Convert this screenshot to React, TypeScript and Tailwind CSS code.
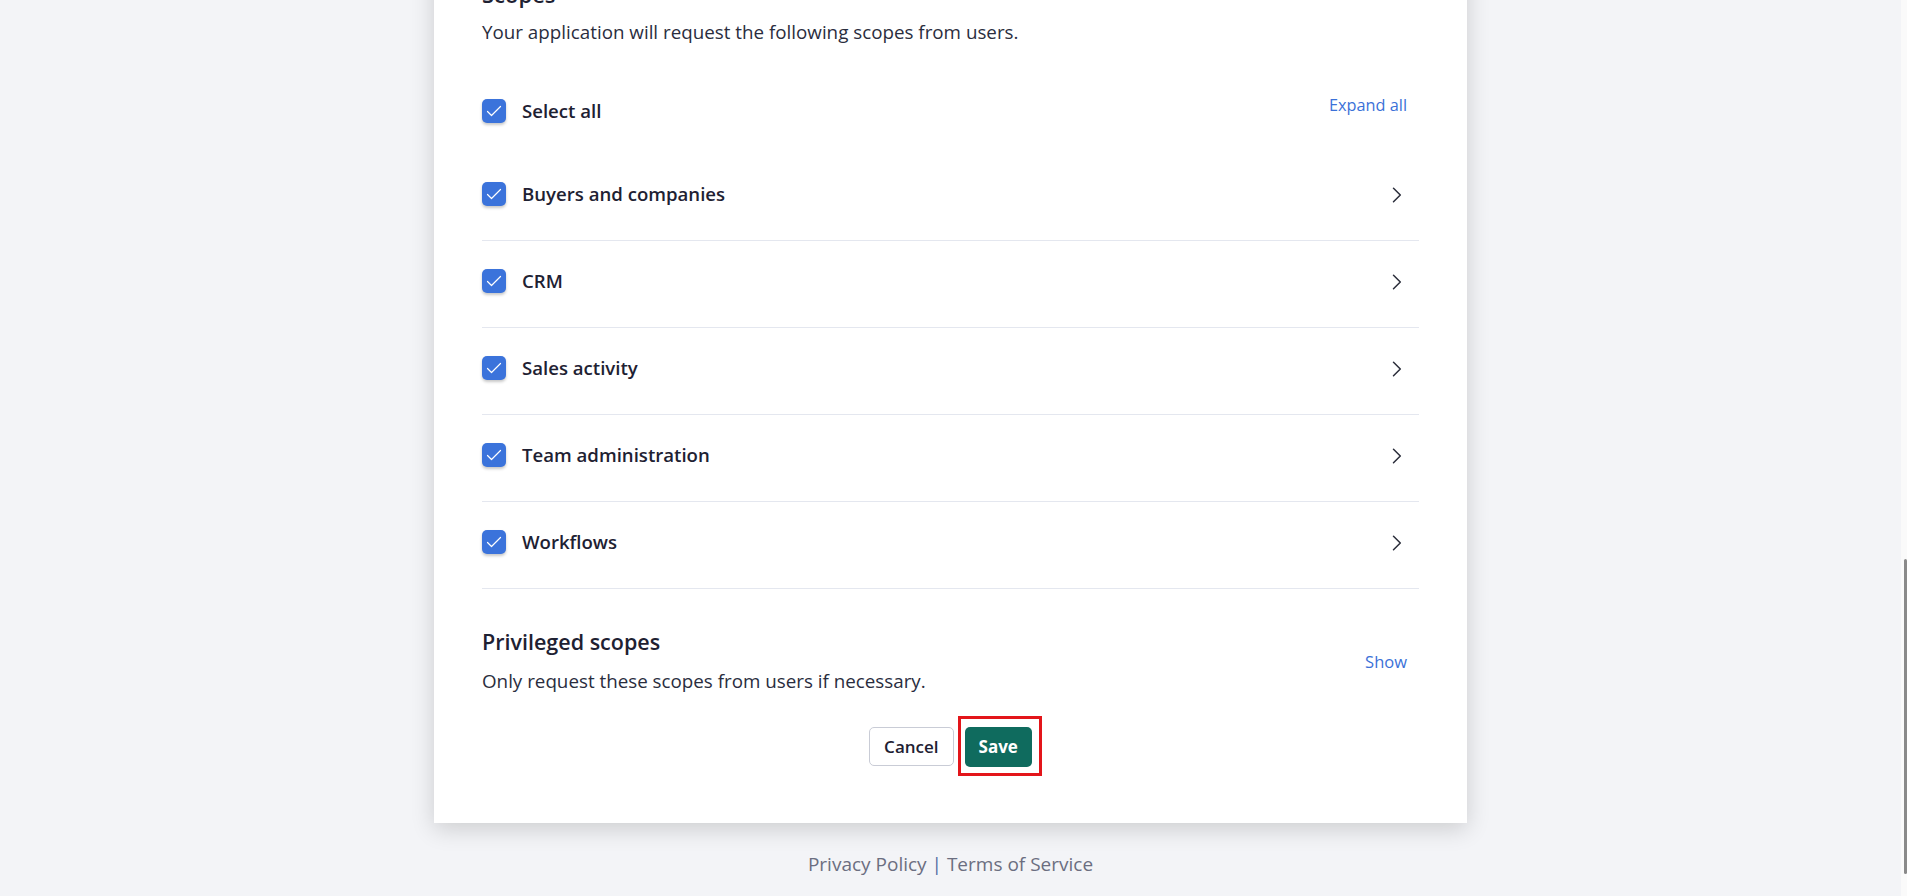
import React from 'react';

const font = { fontFamily: '"Open Sans", "Noto Sans", sans-serif' };

function Checkbox() {
  return (
    <span className="flex h-6 w-6 shrink-0 items-center justify-center rounded-[5px] bg-[#3b73db] shadow-[0_2px_3px_rgba(0,0,0,0.22)]">
      <svg width="24" height="24" viewBox="0 0 24 24" fill="none">
        <polyline points="5.5,12.5 9.5,16.5 18.5,7.5" stroke="white" strokeWidth="1.2" strokeLinecap="round" strokeLinejoin="round" />
      </svg>
    </span>
  );
}

function Chevron() {
  return (
    <svg width="10" height="16" viewBox="0 0 10 16" fill="none" className="mr-[17px] mt-[5px] shrink-0">
      <polyline points="1.5,1.2 8.3,8 1.5,14.8" stroke="#2a2d3a" strokeWidth="1.5" strokeLinecap="round" strokeLinejoin="round" />
    </svg>
  );
}

export default function App() {
  const scopes = ['Buyers and companies', 'CRM', 'Sales activity', 'Team administration', 'Workflows'];

  return (
    <div className="flex h-screen w-full overflow-hidden bg-[#f3f4f7]" style={font}>
      <div className="flex flex-1 flex-col items-center">
        <div className="-mt-[60px] w-[1033px] shrink-0 bg-white px-12 pt-[38px] pb-[56px] shadow-[0_6px_22px_rgba(0,0,0,0.16)]">
          <h2 className="text-[22px] font-semibold leading-8 text-[#1e2132]">Scopes</h2>
          <p className="mt-2 text-[18.8px] leading-7 text-[#2a2d3e]">
            Your application will request the following scopes from users.
          </p>

          <div className="mt-[53px] flex items-start justify-between">
            <div className="flex h-6 items-center gap-4">
              <Checkbox />
              <span className="text-[18.6px] font-semibold leading-6 text-[#1e2132]">Select all</span>
            </div>
            <button className="-mt-[6px] mr-3 text-[16.3px] leading-6 text-[#3b71d8]">Expand all</button>
          </div>

          <div className="mt-[31px]">
            {scopes.map((s) => (
              <div key={s} className="flex items-start justify-between border-b border-[#e4e7ef] pt-[28px] pb-[34px]">
                <div className="flex h-6 items-center gap-4">
                  <Checkbox />
                  <span className="text-[18.6px] font-semibold leading-6 text-[#1e2132]">{s}</span>
                </div>
                <Chevron />
              </div>
            ))}
          </div>

          <div className="mt-[37px] flex items-center justify-between">
            <div>
              <h3 className="text-[21.5px] font-semibold leading-8 text-[#1e2132]">Privileged scopes</h3>
              <p className="mt-[9px] text-[18.8px] leading-7 text-[#2a2d3e]">
                Only request these scopes from users if necessary.
              </p>
            </div>
            <button className="mr-3 mt-[3px] text-[16.5px] leading-6 text-[#3b71d8]">Show</button>
          </div>

          <div className="mt-[32px] flex items-start justify-center gap-[11px]">
            <button className="h-[39px] rounded-[5px] border border-[#c9ccd6] bg-white px-[14px] text-[17px] font-semibold text-[#1e2132]">
              Cancel
            </button>
            <div className="relative">
              <button className="h-10 rounded-[5px] bg-[#0f6b5e] px-[14px] text-[17px] font-bold text-white">
                Save
              </button>
              <span className="pointer-events-none absolute -left-[7px] -top-[11px] -right-[10px] -bottom-[9px] border-[3px] border-[#e3151a]" />
            </div>
          </div>
        </div>

        <div className="mt-[27px] text-[19px] font-medium leading-7 text-[#6b6e80]">
          Privacy Policy <span className="text-[#4f6aa3]">|</span> Terms of Service
        </div>
      </div>

      <div className="flex w-[6px] shrink-0 flex-col bg-[#fafafa]">
        <div className="mt-[559px] ml-[3px] h-[315px] w-[3px] rounded-full bg-[#8a8a8a]" />
      </div>
    </div>
  );
}
